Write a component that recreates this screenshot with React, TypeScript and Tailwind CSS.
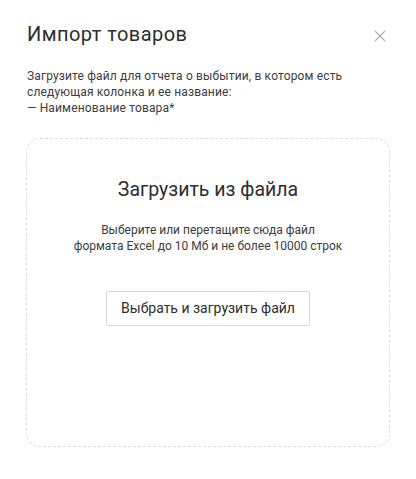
import React from "react";

export default function App() {
  return (
    <div className="w-[416px] h-[479px] bg-white text-[#333] relative" style={{ fontFamily: "Roboto, 'Liberation Sans', sans-serif" }}>
      <div className="px-[27px] pt-[20px]">
        <div className="flex items-start justify-between">
          <h1 className="text-[20px] leading-[28px] tracking-[0.45px] text-[#2e2e2e] font-normal">Импорт товаров</h1>
          <button className="mt-[10px] mr-[3px] text-[#aaa]" aria-label="close">
            <svg width="12" height="12" viewBox="0 0 12 12" fill="none" stroke="#b0b0b0" strokeWidth="1.3">
              <path d="M1 1L11 11M11 1L1 11" />
            </svg>
          </button>
        </div>
        <div className="mt-[20px] text-[12px] leading-[16px] tracking-[0.15px] text-[#3c3c3c]">
          <p>Загрузите файл для отчета о выбытии, в котором есть</p>
          <p>следующая колонка и ее название:</p>
          <p>— Наименование товара*</p>
        </div>
      </div>
      <div className="mx-[26px] mt-[22px] h-[309px] rounded-[14px] border border-dashed border-[#dcdcdc] flex flex-col items-center">
        <div className="mt-[39px] text-[19.5px] leading-[24px] text-[#2e2e2e]">Загрузить из файла</div>
        <div className="mt-[20px] text-[12px] leading-[16px] text-[#3c3c3c] text-center">
          <p>Выберите или перетащите сюда файл</p>
          <p>формата Excel до 10 Мб и не более 10000 строк</p>
        </div>
        <button className="mt-[37px] h-[35px] px-[14px] border border-[#d6d6d6] rounded-[2px] text-[14px] text-[#2e2e2e]">
          Выбрать и загрузить файл
        </button>
      </div>
    </div>
  );
}
